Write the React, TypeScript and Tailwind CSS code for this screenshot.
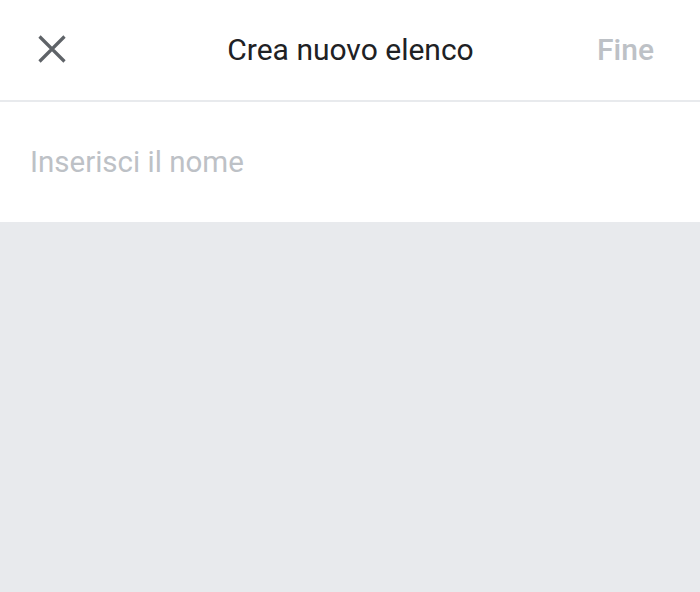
export default function App() {
  return (
    <div className="flex h-[592px] w-[700px] flex-col bg-[#e8eaed] font-['Roboto',sans-serif]">
      <div className="flex h-[102px] items-center border-b-2 border-[#e8eaed] bg-white pb-[2px] pl-[38px] pr-[46px]">
        <button className="flex h-[28px] w-[28px] items-center justify-center text-[#5f6368]">
          <svg width="28" height="28" viewBox="0 0 28 28" fill="none" stroke="currentColor" strokeWidth="3.2">
            <path d="M1.5 1.5 L26.5 26.5 M26.5 1.5 L1.5 26.5" />
          </svg>
        </button>
        <h1 className="flex-1 pl-[38px] text-center text-[30px] text-[#202124]">Crea nuovo elenco</h1>
        <span className="text-[30px] font-medium text-[#bdc1c6]">Fine</span>
      </div>
      <div className="flex h-[120px] items-center bg-white px-[30px]">
        <input
          className="w-full bg-transparent text-[29.5px] text-[#202124] outline-none placeholder:text-[#bdc1c6]"
          placeholder="Inserisci il nome"
        />
      </div>
      <div className="flex-1" />
    </div>
  );
}
